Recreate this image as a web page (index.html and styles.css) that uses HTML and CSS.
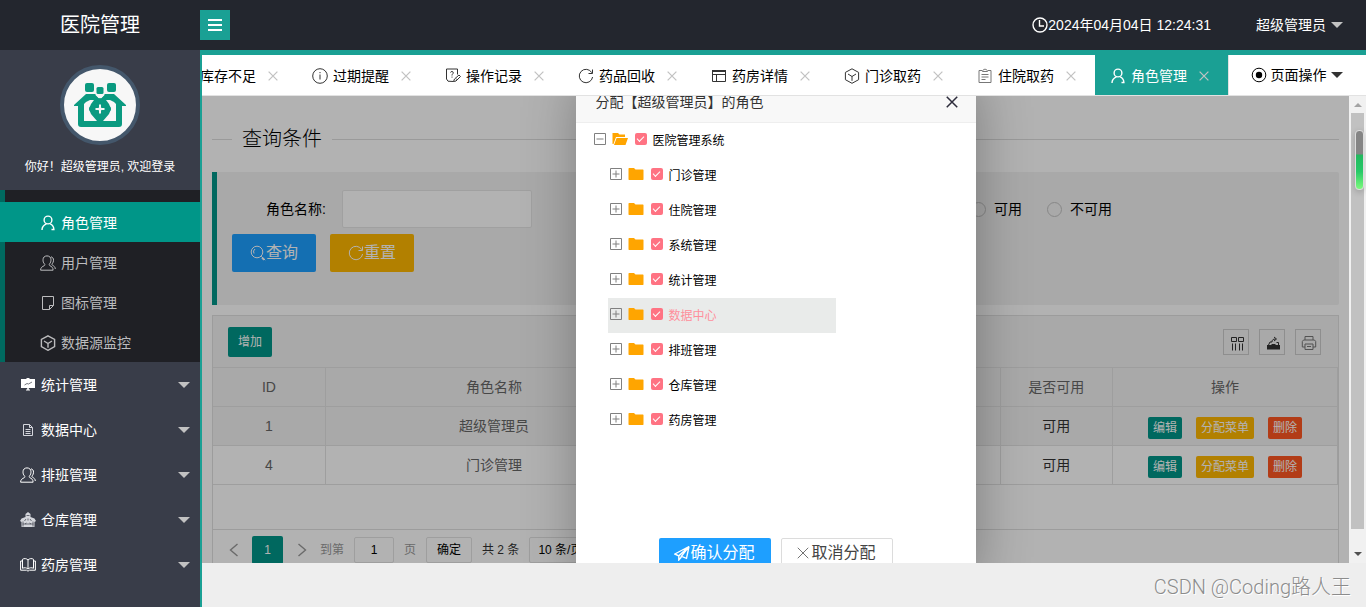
FILE: index.html
```html
<!DOCTYPE html>
<html lang="zh-CN">
<head>
<meta charset="utf-8">
<title>医院管理</title>
<link rel="stylesheet" href="styles.css">
</head>
<body>
<svg class="sprite" aria-hidden="true">
  <symbol id="i-user" viewBox="0 0 16 16"><circle cx="8" cy="5" r="3.900"/><path d="M2 15c0-3 1.800-5.200 4.400-6.200M10.200 8.800c2.300 1 3.600 3 3.700 5.700H11.500"/></symbol>
  <symbol id="i-users" viewBox="0 0 16 16"><path d="M.6 15.200c0-2.600 1.600-3.600 3.800-4.600.7-.5.500-1.200 0-1.800C3.200 7.600 3 6.200 3 4.800 3 2.400 4.600.9 7 .9s4 1.500 4 3.900c0 1.400-.4 2.900-1.400 4-.5.600-.5 1.400.1 1.800 2 .9 3.400 2 3.400 4.600zM11 1.800c1.800.4 2.500 1.700 2.500 3.400 0 1.500-.4 2.400-1.300 3.600-.4.600-.3 1.100.2 1.400 1.600.8 2.900 1.800 2.900 3.800"/></symbol>
  <symbol id="i-note" viewBox="0 0 16 16"><path d="M2.500 1.500h11v9l-4 4h-7zM13.500 10.500h-4v4"/></symbol>
  <symbol id="i-cube" viewBox="0 0 16 16"><path d="M8 .8l6.600 3.600v7.300L8 15.300 1.400 11.700V4.400zM4 6l4 2.500L12 6M8 8.500v4.300"/></symbol>
  <symbol id="i-board" viewBox="0 0 16 16"><path class="solid" d="M1 2h5.500V1h3v1H15v9H1zM7.200 11h1.600v2H7.200zM6 12.500h4v1H6z"/><path class="cut thin" d="M4.500 8l2.500-1.500 1.500.5L12 5"/></symbol>
  <symbol id="i-doc" viewBox="0 0 16 16"><path d="M3.500 2.500h6l3 3v8h-9zM9.500 2.500v3h3M5.500 7.500h5M5.500 9.500h5M5.500 11.500h5"/></symbol>
  <symbol id="i-store" viewBox="0 0 16 16"><path class="solid" d="M8 0l2.500 2v3l4 1.500L16 9l-1.500 1V15h-13v-5L0 9l1.500-2.500 4-1.500V2z"/><path class="cut thin" d="M6.500 3.500h3M4.500 9l1.500-2M10 7l1.500 2M2.500 12h11M5 12l1.500-1M9.500 11l1.500 1M8 6.500v2M3 9.500v5M13 9.500v5"/></symbol>
  <symbol id="i-book" viewBox="0 0 16 16"><path d="M8 3c-1.500-1.700-4-1.800-5.500-.7v9c1.800-.9 4-.7 5.500.7 1.500-1.400 3.700-1.600 5.500-.7v-9C12 1.200 9.500 1.300 8 3zv9M2.500 4H.6v9.200h6l1.400 1 1.400-1h6V4h-1.900"/></symbol>
  <symbol id="i-info" viewBox="0 0 16 16"><circle cx="8" cy="8" r="7.300"/><path d="M8 6.500v5M8 4v1.200"/></symbol>
  <symbol id="i-survey" viewBox="0 0 16 16"><path d="M8.500 13.500l-5.500-.3L1.500 11V1h11v5.500M5.500 4.500c.3-1.500 3-1.300 2.800.4C8.100 6 7 6 7 7.500M7 8.600v1M8.500 13.500l1-2.500 4.500-4 1.500 1.500-4.500 4.500zM11 10.500l1.500 1.500"/></symbol>
  <symbol id="i-refresh" viewBox="0 0 16 16"><path d="M13.800 4.700A6.700 6.700 0 1 0 14.600 9M14.500 1.500v4H10.500"/></symbol>
  <symbol id="i-window" viewBox="0 0 16 16"><path d="M1.500 2.500h13v11h-13zM1.500 6.500h13M5.500 6.500v7"/><path class="solid" d="M1 2h14v2H1z"/></symbol>
  <symbol id="i-list" viewBox="0 0 16 16"><path d="M5 2.500H2v12h12v-12h-3M5.500 3.500c0-3 5-3 5 0zM4.500 6.500h7M4.500 9h7M4.500 11.500h4"/></symbol>
  <symbol id="i-target" viewBox="0 0 16 16"><circle cx="8" cy="8" r="6.800"/><circle class="solid" cx="8" cy="8" r="3.200"/></symbol>
  <symbol id="i-clock" viewBox="0 0 16 16"><circle cx="8" cy="8" r="7"/><path d="M7.500 3v6H12"/></symbol>
  <symbol id="i-close" viewBox="0 0 16 16"><path d="M1 1l14 14M15 1L1 15"/></symbol>
  <symbol id="i-search" viewBox="0 0 16 16"><circle cx="7" cy="7" r="5.800"/><path d="M4 8.500A3.500 3.500 0 0 1 5 4M11.200 11.200l4 4"/><path d="M12 12.600l2.200 2.200" stroke-width="2"/></symbol>
  <symbol id="i-plane" viewBox="0 0 16 16"><path d="M15 1.500L.8 9l4 1.800zM15 1.500L4.800 10.800V15l2.600-3M15 1.500l-2.500 11.800-5.100-2z"/></symbol>
  <symbol id="i-cols" viewBox="0 0 16 16"><path d="M2.500 2.500h5v4h-5zM9.500 2.500h5v4h-5zM3.500 8.500v7M6.500 8.500v7M10.500 8.500v7M13.500 8.500v7"/></symbol>
  <symbol id="i-export" viewBox="0 0 16 16"><path class="solid" d="M2 10h13v4.500H2z"/><path d="M3.500 10l1.500-3h2M11.500 7.500h2V10M6.500 9.500h4M7 7c0-2 1-3 3.500-3M9 2l2.500 2L9 6"/></symbol>
  <symbol id="i-print" viewBox="0 0 16 16"><path d="M4 5V1.500h8V5M4 12H1.300V6.500L2.500 5h11l1.200 1.500V12H12M4 9h8v5.500H4zM6 11.500h4"/></symbol>
  <symbol id="i-minus" viewBox="0 0 12 12"><path d="M.5.5h11v11H.5zM2.500 6h7"/></symbol>
  <symbol id="i-plus" viewBox="0 0 12 12"><path d="M.5.5h11v11H.5zM2.500 6h7M6 2.500v7"/></symbol>
  <symbol id="i-folder" viewBox="0 0 16 12"><path class="solid" d="M1 0h5l1.500 1.500H15l.5.500V11.500l-.5.500H1l-.5-.5V.5z"/></symbol>
  <symbol id="i-folder-open" viewBox="0 0 16 12"><path class="solid" d="M.5 0H6l1.500 1.500H13V4H4L1.500 11H.5zM4.600 5H16l-2.500 7H2z"/></symbol>
  <symbol id="i-prev" viewBox="0 0 16 16"><path d="M11.500 2L4.500 8l7 6"/></symbol>
  <symbol id="i-next" viewBox="0 0 16 16"><path d="M4.500 2l7 6-7 6"/></symbol>
  <symbol id="i-menu" viewBox="0 0 16 16"><path d="M1 3h14M1 8h14M1 13h14"/></symbol>
</svg>

<header class="header">
  <h1 class="logo">医院管理</h1>
  <button class="toggle" aria-label="菜单"><svg class="icon bold"><use href="#i-menu"/></svg></button>
  <time class="clock"><svg class="icon medium"><use href="#i-clock"/></svg>2024年04月04日 12:24:31</time>
  <button class="account">超级管理员<i class="caret"></i></button>
</header>

<div class="body">
  <aside class="side">
    <div class="profile">
      <div class="avatar">
        <svg viewBox="0 0 54 46" class="hospital">
          <g fill="#0a9a80"><rect x="12" y="1" width="9" height="9" rx="2"/><rect x="23.500" y="5" width="7" height="7" rx="1.500"/><rect x="34" y="1" width="9" height="9" rx="2"/>
          <path d="M13 12h9l5 5 5-5h9l12 11v1h-4v18q0 3-3 3H8q-3 0-3-3V24H1v-1z"/></g>
          <path fill="#f7f7f7" d="M22.500 13h9L27 17.500zM13 20l4-2h4l-3 4-2 5 2 5 6 7H11V22zM41 20l-4-2h-4l3 4 2 5-2 5-6 7h13V22z"/>
          <path fill="none" stroke="#0a9a80" stroke-width="3" stroke-linejoin="round" d="M24 20q3-5 6 0l1 2.500 3 1.500q5 3 0 6l-3 1.500-1 2.500q-3 5-6 0l-1-2.500-3-1.500q-5-3 0-6l3-1.500z"/>
          <path d="M25.500 22h3v3.500H32v3h-3.500V32h-3v-3.500H22v-3h3.500z" fill="#f7f7f7" stroke="#0a9a80"/>
        </svg>
      </div>
      <p class="greet">你好！超级管理员, 欢迎登录</p>
    </div>
    <nav>
      <div class="sub">
        <a class="sub-link active" href="#"><svg class="icon medium"><use href="#i-user"/></svg>角色管理</a>
        <a class="sub-link" href="#"><svg class="icon"><use href="#i-users"/></svg>用户管理</a>
        <a class="sub-link" href="#"><svg class="icon"><use href="#i-note"/></svg>图标管理</a>
        <a class="sub-link" href="#"><svg class="icon medium"><use href="#i-cube"/></svg>数据源监控</a>
      </div>
      <a class="nav-link" href="#"><svg class="icon"><use href="#i-board"/></svg>统计管理<i class="caret"></i></a>
      <a class="nav-link" href="#"><svg class="icon pale"><use href="#i-doc"/></svg>数据中心<i class="caret"></i></a>
      <a class="nav-link" href="#"><svg class="icon"><use href="#i-users"/></svg>排班管理<i class="caret"></i></a>
      <a class="nav-link" href="#"><svg class="icon pale"><use href="#i-store"/></svg>仓库管理<i class="caret"></i></a>
      <a class="nav-link" href="#"><svg class="icon"><use href="#i-book"/></svg>药房管理<i class="caret"></i></a>
    </nav>
  </aside>

  <main class="main">
    <div class="tabbar">
      <div class="tabs">
        <a class="tab" href="#">库存不足<svg class="close"><use href="#i-close"/></svg></a>
        <a class="tab" href="#"><svg class="icon"><use href="#i-info"/></svg>过期提醒<svg class="close"><use href="#i-close"/></svg></a>
        <a class="tab" href="#"><svg class="icon"><use href="#i-survey"/></svg>操作记录<svg class="close"><use href="#i-close"/></svg></a>
        <a class="tab" href="#"><svg class="icon"><use href="#i-refresh"/></svg>药品回收<svg class="close"><use href="#i-close"/></svg></a>
        <a class="tab" href="#"><svg class="icon"><use href="#i-window"/></svg>药房详情<svg class="close"><use href="#i-close"/></svg></a>
        <a class="tab" href="#"><svg class="icon"><use href="#i-cube"/></svg>门诊取药<svg class="close"><use href="#i-close"/></svg></a>
        <a class="tab" href="#"><svg class="icon faint"><use href="#i-list"/></svg>住院取药<svg class="close"><use href="#i-close"/></svg></a>
        <a class="tab current" href="#"><svg class="icon medium"><use href="#i-user"/></svg>角色管理<svg class="close"><use href="#i-close"/></svg></a>
      </div>
      <button class="page-ops"><svg class="icon"><use href="#i-target"/></svg>页面操作<i class="caret"></i></button>
    </div>

    <div class="frame">
      <div class="view">
        <div class="page">
          <fieldset class="title"><legend>查询条件</legend></fieldset>
          <form class="query">
            <div class="fields">
              <div class="field"><label for="role">角色名称:</label><input id="role" type="text"></div>
              <div class="radios">
                <label><input type="radio" name="state">可用</label>
                <label><input type="radio" name="state">不可用</label>
              </div>
            </div>
            <div class="actions">
              <button type="button" class="btn blue"><svg class="icon"><use href="#i-search"/></svg>查询</button>
              <button type="button" class="btn amber"><svg class="icon"><use href="#i-refresh"/></svg>重置</button>
            </div>
          </form>

          <section class="grid">
            <div class="toolbar">
              <button class="btn add">增加</button>
              <div class="tools">
                <button aria-label="筛选列"><svg class="icon"><use href="#i-cols"/></svg></button>
                <button aria-label="导出"><svg class="icon"><use href="#i-export"/></svg></button>
                <button class="light" aria-label="打印"><svg class="icon"><use href="#i-print"/></svg></button>
              </div>
            </div>
            <table>
              <colgroup><col class="w10"><col class="w30"><col class="w30"><col class="w10"><col class="w20"></colgroup>
              <thead><tr><th>ID</th><th>角色名称</th><th></th><th>是否可用</th><th>操作</th></tr></thead>
              <tbody>
                <tr class="hover"><td>1</td><td>超级管理员</td><td></td><td><span class="dark">可用</span></td><td><div class="ops"><button class="mini green">编辑</button><button class="mini amber">分配菜单</button><button class="mini red">删除</button></div></td></tr>
                <tr><td>4</td><td>门诊管理</td><td></td><td><span class="dark">可用</span></td><td><div class="ops"><button class="mini green">编辑</button><button class="mini amber">分配菜单</button><button class="mini red">删除</button></div></td></tr>
              </tbody>
            </table>
            <div class="pager">
              <button class="arrow" aria-label="上一页"><svg class="icon medium"><use href="#i-prev"/></svg></button>
              <button class="num">1</button>
              <button class="arrow" aria-label="下一页"><svg class="icon medium"><use href="#i-next"/></svg></button>
              <label for="goto">到第</label><input id="goto" type="text" value="1"><span>页</span>
              <button class="ok">确定</button>
              <span class="total">共 2 条</span>
              <select aria-label="每页条数"><option>10 条/页</option></select>
            </div>
          </section>
        </div>

        <div class="shade"></div>
        <div class="dialog" role="dialog">
          <div class="dialog-head"><span>分配【超级管理员】的角色</span><button aria-label="关闭"><svg class="close"><use href="#i-close"/></svg></button></div>
          <ul class="tree">
            <li class="root"><svg class="box"><use href="#i-minus"/></svg><svg class="folder"><use href="#i-folder-open"/></svg><label><input type="checkbox" checked>医院管理系统</label></li>
            <li><svg class="box"><use href="#i-plus"/></svg><svg class="folder"><use href="#i-folder"/></svg><label><input type="checkbox" checked>门诊管理</label></li>
            <li><svg class="box"><use href="#i-plus"/></svg><svg class="folder"><use href="#i-folder"/></svg><label><input type="checkbox" checked>住院管理</label></li>
            <li><svg class="box"><use href="#i-plus"/></svg><svg class="folder"><use href="#i-folder"/></svg><label><input type="checkbox" checked>系统管理</label></li>
            <li><svg class="box"><use href="#i-plus"/></svg><svg class="folder"><use href="#i-folder"/></svg><label><input type="checkbox" checked>统计管理</label></li>
            <li class="over"><svg class="box"><use href="#i-plus"/></svg><svg class="folder"><use href="#i-folder"/></svg><label><input type="checkbox" checked>数据中心</label></li>
            <li><svg class="box"><use href="#i-plus"/></svg><svg class="folder"><use href="#i-folder"/></svg><label><input type="checkbox" checked>排班管理</label></li>
            <li><svg class="box"><use href="#i-plus"/></svg><svg class="folder"><use href="#i-folder"/></svg><label><input type="checkbox" checked>仓库管理</label></li>
            <li><svg class="box"><use href="#i-plus"/></svg><svg class="folder"><use href="#i-folder"/></svg><label><input type="checkbox" checked>药房管理</label></li>
          </ul>
          <div class="dialog-foot">
            <button class="btn blue"><svg class="icon medium"><use href="#i-plane"/></svg>确认分配</button>
            <button class="btn plain"><svg class="close"><use href="#i-close"/></svg>取消分配</button>
          </div>
        </div>
      </div>
      <div class="scroll"><i class="up"></i><i class="thumb"></i><i class="down"></i><i class="gauge"></i></div>
    </div>
    <footer class="footer">CSDN @Coding路人王</footer>
  </main>
</div>
</body>
</html>
```
FILE: styles.css
```css
* { box-sizing: border-box; }
body {
  margin: 0;
  height: 100vh;
  display: flex;
  flex-direction: column;
  overflow: hidden;
  font: 14px/24px "Liberation Sans", "Noto Sans CJK SC", sans-serif;
  color: #000;
}
button, input, select { font: inherit; color: inherit; margin: 0; }
button { border: 0; padding: 0; background: none; display: flex; align-items: center; justify-content: center; }
a { color: inherit; text-decoration: none; }
.sprite { display: none; }
symbol { overflow: visible; }
.icon, .close, .box, .folder { fill: none; stroke: currentColor; stroke-width: 1; flex: none; }
.icon { width: 16px; height: 16px; }
.close { width: 10px; height: 10px; stroke-width: 2; }
.medium { stroke-width: 1.4; }
.bold { stroke-width: 2; }
.pale { color: #d4d6dc; }
.faint { color: #777; }
.solid { fill: currentColor; stroke: none; }
.cut { stroke: #393d49; }
.thin { stroke-width: .7; }
.caret { border: 6px solid transparent; border-top-color: #c2c2c2; border-bottom: 0; }

/* header */
.header { flex: none; height: 50px; display: flex; align-items: center; background: #23262e; color: #fff; }
.logo { width: 200px; margin: 0; text-align: center; font-size: 20px; font-weight: 400; }
.toggle { width: 30px; height: 30px; background: #1aa094; }
.clock { margin-left: auto; display: flex; align-items: center; }
.account { margin: 0 23px 0 45px; gap: 5px; }

.body { flex: 1; display: flex; min-height: 0; }

/* side navigation */
.side { flex: none; width: 200px; background: #393d49; color: #fff; overflow: hidden; }
.profile { height: 140px; padding-top: 15px; display: flex; flex-direction: column; align-items: center; gap: 10px; }
.avatar { width: 80px; height: 80px; border: 4px solid #44576b; border-radius: 50%; background: #f7f7f7; display: flex; align-items: center; justify-content: center; }
.hospital { width: 54px; height: 46px; }
.greet { margin: 0; font-size: 12px; }
.sub { padding-top: 12px; background: #1f2025; border-left: 5px solid #00695f; color: #bcbcbe; }
.sub-link { display: flex; align-items: center; gap: 5px; height: 40px; padding: 2px 0 0 35px; }
.sub-link.active { background: #009688; color: #fff; margin-left: -5px; padding-left: 40px; }
.nav-link { display: flex; align-items: center; gap: 5px; height: 45px; padding: 0 10px 0 20px; }
.nav-link .caret { margin-left: auto; }

/* tabs */
.main { flex: 1; min-width: 0; display: flex; flex-direction: column; border: solid #1aa094; border-width: 5px 0 0 2px; }
.tabbar { flex: none; display: flex; height: 41px; border-bottom: 1px solid #e2e2e2; background: #fff; }
.tabs { flex: 1; min-width: 0; display: flex; justify-content: flex-end; overflow: hidden; }
.tab { flex: none; width: 133px; display: flex; align-items: center; justify-content: flex-end; padding: 2px 19px 0 0; gap: 5px; }
.tab .icon:not(.faint) { color: #333; }
.tab .close { margin-left: 7px; color: #c2c2c2; }
.tab.current, .tab.current .icon { color: #fff; }
.tab.current { background: #1aa094; }
.page-ops { width: 138px; border-left: 1px solid #e2e2e2; gap: 4px; padding-right: 2px; }
.page-ops .caret { border-top-color: #333; }

/* content frame */
.frame { flex: 1; min-height: 0; display: flex; }
.view { flex: 1; min-width: 0; position: relative; overflow: hidden; background: #fff; }
.page { padding: 28px 10px 0; }
.title { margin: 0; padding: 0; border: 0; border-top: 1px solid #ddd; height: 48px; }
.title legend { margin-left: 20px; padding: 0 10px; font-size: 20px; line-height: 30px; font-weight: 300; }
.query { margin-bottom: 10px; height: 133px; padding: 18px 15px; background: #f2f2f2; border-left: 5px solid #009688; border-radius: 0 2px 2px 0; }
.fields { display: grid; grid-template-columns: 300px 310px auto; column-gap: 10px; align-items: center; }
.field { display: flex; align-items: center; }
.field label { width: 110px; padding-right: 16px; text-align: right; flex: none; }
.field input { width: 190px; height: 38px; border: 1px solid #e6e6e6; border-radius: 2px; background: #fff; }
.radios { grid-column: 3; padding-left: 109px; display: flex; gap: 25px; }
.radios label { display: flex; align-items: center; gap: 8px; }
.radios input { appearance: none; width: 15px; height: 15px; border: 1px solid #c2c2c2; border-radius: 50%; }
.actions { display: flex; gap: 14px; margin-top: 6px; }
.btn { height: 38px; padding: 0 18px; border-radius: 2px; color: #fff; font-size: 16px; }
.blue { background: #1e9fff; }
.amber { background: #ffb800; }
.green { background: #009688; }
.red { background: #ff5722; }
.plain { background: #fff; color: #444; border: 1px solid #dcdcdc; gap: 2px; }
.plain .close { stroke-width: 1; width: 12px; height: 12px; }

/* role table */
.grid { border: 1px solid #e0e0e0; color: #666; }
.toolbar { display: flex; align-items: center; justify-content: space-between; height: 51px; padding: 0 17px 0 15px; background: #f2f2f2; }
.add { height: 30px; padding: 0 10px; font-size: 12px; background: #009688; }
.tools { display: flex; gap: 10px; color: #333; }
.tools button { width: 26px; height: 26px; border: 1px solid #ccc; padding: 2px 0 0 2px; }
.tools .light { color: #777; }
table { width: 100%; table-layout: fixed; border-collapse: collapse; }
.w10 { width: 10%; }
.w20 { width: 20%; }
.w30 { width: 30%; }
th, td { height: 39px; padding: 0; text-align: center; font-weight: 400; border: solid #e3e3e3; border-width: 1px 1px 1px 0; }
thead, .hover { background: #f2f2f2; }
.dark { color: #333; }
.ops { display: flex; justify-content: center; gap: 14px; padding-top: 4px; }
.mini { height: 22px; padding: 0 5px; border-radius: 2px; font-size: 12px; color: #fff; }
.pager { display: flex; align-items: center; gap: 10px; margin-top: 44px; padding: 6px 12px; border-top: 1px solid #e0e0e0; font-size: 12px; color: #999; }
.pager .arrow { width: 17px; }
.pager .num { width: 31px; height: 28px; border-radius: 2px; background: #009688; color: #fff; }
.pager input, .pager .ok, .pager select { height: 26px; border: 1px solid #e2e2e2; border-radius: 2px; background: #fff; color: #000; }
.pager input { width: 40px; padding: 0; text-align: center; }
.pager .ok { width: 46px; }
.pager .total { color: #333; }
.pager select { width: 90px; padding: 0 4px; }

/* dialog over the page */
.shade { position: absolute; inset: 0; background: rgba(0, 0, 0, .3); }
.dialog { position: absolute; top: -15px; left: calc(50% - 200px); width: 400px; height: 500px; display: flex; flex-direction: column; background: #fff; box-shadow: 1px 1px 50px rgba(0, 0, 0, .3); }
.dialog-head { display: flex; align-items: center; justify-content: space-between; height: 42px; padding: 0 18px 0 20px; background: #f8f8f8; border-bottom: 1px solid #eee; color: #333; }
.dialog-head .close { width: 12px; height: 12px; color: #2d2c3b; }
.tree { flex: 1; margin: 0; padding: 0 0 0 16px; list-style: none; font-size: 12px; }
.tree li { display: flex; align-items: center; width: 228px; height: 35px; margin-left: 16px; padding-left: 2px; }
.tree .root { margin-left: 0; }
.tree .over { background: #e9ebea; color: #ff8f9b; }
.tree .box { width: 12px; height: 12px; color: #808080; margin: 0 6px 3px 0; }
.tree .folder { width: 16px; height: 12px; color: #ffa500; margin: 0 7px 3px 0; }
.tree label { display: flex; align-items: center; gap: 6px; }
.tree input { appearance: none; width: 12px; height: 12px; margin-bottom: 3px; border-radius: 2px; background: #ff7383; display: flex; align-items: center; justify-content: center; }
.tree input::after { content: ""; width: 6px; height: 3px; border: solid #fff; border-width: 0 0 1px 1px; transform: rotate(-45deg); margin-bottom: 2px; }
.dialog-foot { display: flex; justify-content: center; gap: 10px; padding-bottom: 13px; }
.dialog-foot .btn { width: 112px; height: 30px; padding: 0; }

/* scroll bar */
.scroll { flex: none; position: relative; width: 17px; padding: 7px 2px; display: flex; flex-direction: column; align-items: center; background: #f1f1f1; }
.up { border: 4px solid transparent; border-bottom-color: #a3a3a3; border-top: 0; margin-bottom: 6px; }
.thumb { flex: 1; width: 13px; background: #c1c1c1; margin-bottom: 23px; }
.down { border: 4px solid transparent; border-top-color: #505050; border-bottom: 0; }
.gauge { position: absolute; top: 34px; right: 2px; width: 9px; height: 60px; border: 1px solid #ddd; border-radius: 4px; background: linear-gradient(#858585 40%, #22b95f 41%, #28c968 70%, #7dfa7d); box-shadow: 0 2px 6px rgba(0, 0, 0, .2); }

.footer { flex: none; height: 44px; display: flex; align-items: center; justify-content: flex-end; padding: 4px 15px 0 0; background: #eee; color: #8c8c8c; font: 300 20px/30px Roboto, "Noto Sans CJK SC", sans-serif; text-shadow: 1px 1px 0 #fff; }
```
